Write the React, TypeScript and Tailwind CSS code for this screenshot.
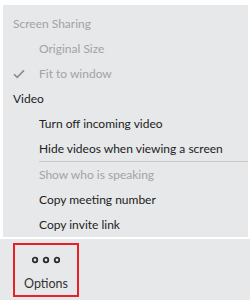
const font = { fontFamily: 'Lato, "Open Sans", sans-serif' };

type Row = {
  label: string;
  kind: 'header' | 'item' | 'disabled';
  checked?: boolean;
  divider?: boolean;
};

const rows: Row[] = [
  { label: 'Screen Sharing', kind: 'disabled' },
  { label: 'Original Size', kind: 'disabled' },
  { label: 'Fit to window', kind: 'disabled', checked: true },
  { label: 'Video', kind: 'header' },
  { label: 'Turn off incoming video', kind: 'item' },
  { label: 'Hide videos when viewing a screen', kind: 'item', divider: true },
  { label: 'Show who is speaking', kind: 'disabled' },
  { label: 'Copy meeting number', kind: 'item' },
  { label: 'Copy invite link', kind: 'item' },
];

function Check() {
  return (
    <svg width="12" height="10" viewBox="0 0 12 10" className="absolute left-[10px] top-1/2 -translate-y-1/2">
      <path d="M1 5.2 L4.2 8.4 L11 1.4" fill="none" stroke="#8c8c8c" strokeWidth="1.6" />
    </svg>
  );
}

function Dots() {
  return (
    <svg width="28" height="8" viewBox="0 0 28 8">
      <circle cx="3" cy="4" r="2.3" fill="none" stroke="#2a2a2a" strokeWidth="1.8" />
      <circle cx="14" cy="4" r="2.3" fill="none" stroke="#2a2a2a" strokeWidth="1.8" />
      <circle cx="25" cy="4" r="2.3" fill="none" stroke="#2a2a2a" strokeWidth="1.8" />
    </svg>
  );
}

export default function App() {
  return (
    <div className="w-[251px] h-[300px] bg-white overflow-hidden" style={font}>
      <div className="pt-[5px] pl-[3px]">
        <div className="w-[245px] bg-[#e7e8ea] pt-[6px] flex flex-col">
          {rows.map((r, i) => {
            const header = i === 0 || r.kind === 'header';
            return (
              <div key={r.label} className="flex flex-col">
                <div
                  className={`relative h-[25px] flex items-center text-[12px] whitespace-nowrap ${
                    header ? 'pl-[10px]' : 'pl-[36px]'
                  } ${r.kind === 'disabled' ? 'text-[#a3a3a3]' : 'text-[#222]'}`}
                >
                  {r.checked && <Check />}
                  {r.label}
                </div>
                {r.divider && <div className="ml-[36px] h-px bg-[#c9c9c9]" />}
              </div>
            );
          })}
        </div>
      </div>
      <div className="mt-[2px] w-[250px] h-[61px] bg-[#e7e8ea] pt-[4px] pl-[13px]">
        <div className="w-[66px] h-[54px] border-2 border-[#e8202a] flex flex-col items-center pt-[11px]">
          <Dots />
          <div className="mt-[14px] text-[12.5px] leading-none text-[#333]">Options</div>
        </div>
      </div>
    </div>
  );
}
